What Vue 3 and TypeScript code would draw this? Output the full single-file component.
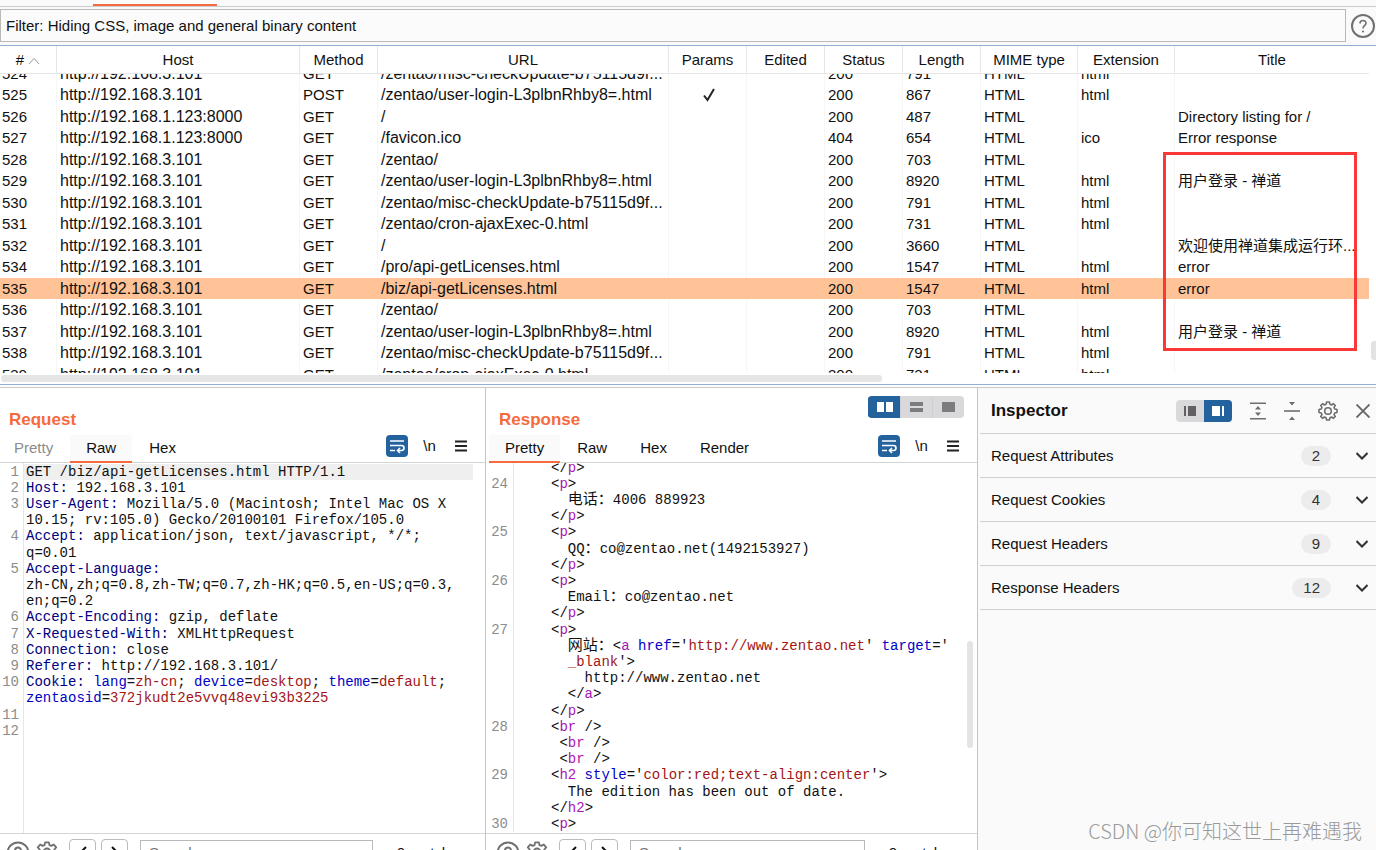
<script setup lang="ts">
import { onMounted, ref } from 'vue'

interface Entry {
  id: number
  host: string
  method: string
  url: string
  params?: boolean
  status: number
  length: number
  ext?: string
  title?: string
}

type Token = [kind: string, text: string]
interface Line {
  no?: number
  tokens: Token[]
}

const LOCAL = 'http://192.168.3.101'
const REMOTE = 'http://192.168.1.123:8000'
const LOGIN = '/zentao/user-login-L3plbnRhby8=.html'
const CHECK = '/zentao/misc-checkUpdate-b75115d9f...'
const CRON = '/zentao/cron-ajaxExec-0.html'

const entries: Entry[] = [
  { id: 524, host: LOCAL, method: 'GET', url: CHECK, status: 200, length: 791, ext: 'html' },
  { id: 525, host: LOCAL, method: 'POST', url: LOGIN, params: true, status: 200, length: 867, ext: 'html' },
  { id: 526, host: REMOTE, method: 'GET', url: '/', status: 200, length: 487, title: 'Directory listing for /' },
  { id: 527, host: REMOTE, method: 'GET', url: '/favicon.ico', status: 404, length: 654, ext: 'ico', title: 'Error response' },
  { id: 528, host: LOCAL, method: 'GET', url: '/zentao/', status: 200, length: 703 },
  { id: 529, host: LOCAL, method: 'GET', url: LOGIN, status: 200, length: 8920, ext: 'html', title: '用户登录 - 禅道' },
  { id: 530, host: LOCAL, method: 'GET', url: CHECK, status: 200, length: 791, ext: 'html' },
  { id: 531, host: LOCAL, method: 'GET', url: CRON, status: 200, length: 731, ext: 'html' },
  { id: 532, host: LOCAL, method: 'GET', url: '/', status: 200, length: 3660, title: '欢迎使用禅道集成运行环...' },
  { id: 534, host: LOCAL, method: 'GET', url: '/pro/api-getLicenses.html', status: 200, length: 1547, ext: 'html', title: 'error' },
  { id: 535, host: LOCAL, method: 'GET', url: '/biz/api-getLicenses.html', status: 200, length: 1547, ext: 'html', title: 'error' },
  { id: 536, host: LOCAL, method: 'GET', url: '/zentao/', status: 200, length: 703 },
  { id: 537, host: LOCAL, method: 'GET', url: LOGIN, status: 200, length: 8920, ext: 'html', title: '用户登录 - 禅道' },
  { id: 538, host: LOCAL, method: 'GET', url: CHECK, status: 200, length: 791, ext: 'html' },
  { id: 539, host: LOCAL, method: 'GET', url: CRON, status: 200, length: 731, ext: 'html' },
]

const selectedId = ref(535)

const requestLines: Line[] = [
  { no: 1, tokens: [['', 'GET /biz/api-getLicenses.html HTTP/1.1']] },
  { no: 2, tokens: [['name', 'Host:'], ['', ' 192.168.3.101']] },
  { no: 3, tokens: [['name', 'User-Agent:'], ['', ' Mozilla/5.0 (Macintosh; Intel Mac OS X']] },
  { tokens: [['', '10.15; rv:105.0) Gecko/20100101 Firefox/105.0']] },
  { no: 4, tokens: [['name', 'Accept:'], ['', ' application/json, text/javascript, */*;']] },
  { tokens: [['', 'q=0.01']] },
  { no: 5, tokens: [['name', 'Accept-Language:']] },
  { tokens: [['', 'zh-CN,zh;q=0.8,zh-TW;q=0.7,zh-HK;q=0.5,en-US;q=0.3,']] },
  { tokens: [['', 'en;q=0.2']] },
  { no: 6, tokens: [['name', 'Accept-Encoding:'], ['', ' gzip, deflate']] },
  { no: 7, tokens: [['name', 'X-Requested-With:'], ['', ' XMLHttpRequest']] },
  { no: 8, tokens: [['name', 'Connection:'], ['', ' close']] },
  { no: 9, tokens: [['name', 'Referer:'], ['', ' http://192.168.3.101/']] },
  {
    no: 10,
    tokens: [
      ['name', 'Cookie:'], ['attr', ' lang'], ['', '='], ['value', 'zh-cn'], ['', '; '],
      ['attr', 'device'], ['', '='], ['value', 'desktop'], ['', '; '],
      ['attr', 'theme'], ['', '='], ['value', 'default'], ['', ';'],
    ],
  },
  { tokens: [['attr', 'zentaosid'], ['', '='], ['value', '372jkudt2e5vvq48evi93b3225']] },
  { no: 11, tokens: [] },
  { no: 12, tokens: [] },
]

const open = (tag: string, no?: number, lead = ''): Line => ({ no, tokens: [['', lead + '<'], ['tag', tag], ['', '>']] })
const close = (tag: string, lead = ''): Line => ({ tokens: [['', lead + '</'], ['tag', tag], ['', '>']] })
const br = (lead = '', no?: number): Line => ({ no, tokens: [['', lead + '<'], ['tag', 'br'], ['', ' />']] })

const responseLines: Line[] = [
  close('p'),
  open('p', 24),
  { tokens: [['', '  '], ['cjk', '电话：'], ['', '4006 889923']] },
  close('p'),
  open('p', 25),
  { tokens: [['', '  QQ'], ['cjk', '：'], ['', 'co@zentao.net(1492153927)']] },
  close('p'),
  open('p', 26),
  { tokens: [['', '  Email'], ['cjk', '：'], ['', 'co@zentao.net']] },
  close('p'),
  open('p', 27),
  {
    tokens: [
      ['', '  '], ['cjk', '网站：'], ['', '<'], ['tag', 'a'], ['attr', ' href'], ['', "='"],
      ['value', 'http://www.zentao.net'], ['', "' "], ['attr', 'target'], ['', "='"],
    ],
  },
  { tokens: [['value', '  _blank'], ['', "'>"]] },
  { tokens: [['', '    http://www.zentao.net']] },
  close('a', '  '),
  close('p'),
  br('', 28),
  br(' '),
  br(' '),
  { no: 29, tokens: [['', '<'], ['tag', 'h2'], ['attr', ' style'], ['', "='"], ['value', 'color:red;text-align:center'], ['', "'>"]] },
  { tokens: [['', '  The edition has been out of date.']] },
  close('h2'),
  open('p', 30),
]

const panes = [
  { key: 'request', title: 'Request', tabs: ['Pretty', 'Raw', 'Hex'], active: 'Raw', muted: 'Pretty', lines: requestLines },
  { key: 'response', title: 'Response', tabs: ['Pretty', 'Raw', 'Hex', 'Render'], active: 'Pretty', muted: '', lines: responseLines },
]

const sections = [
  { label: 'Request Attributes', count: 2 },
  { label: 'Request Cookies', count: 4 },
  { label: 'Request Headers', count: 9 },
  { label: 'Response Headers', count: 12 },
]

const history = ref<HTMLElement | null>(null)
onMounted(() => {
  if (history.value) history.value.scrollTop = 11
})
</script>

<template>
  <div class="app">
    <nav class="top-tabs">
      <button type="button">Intercept</button>
      <button type="button" class="current">HTTP history</button>
      <button type="button">WebSockets history</button>
      <button type="button">Options</button>
    </nav>

    <div class="filter-row">
      <button type="button" class="filter">Filter: Hiding CSS, image and general binary content</button>
      <button type="button" class="icon" aria-label="Help">
        <svg width="26" height="26" viewBox="0 0 26 26" fill="none" stroke="#707070" stroke-width="2">
          <circle cx="13" cy="13" r="11" />
          <path d="M10 10.500C10 6.500 16 6.500 16 10.300C16 12.500 13 12.500 13 15.500" stroke-width="1.600" />
          <circle cx="13" cy="18.500" r="1.100" fill="#707070" stroke="none" />
        </svg>
      </button>
    </div>

    <section class="history-wrap">
      <div ref="history" class="history">
        <table>
          <colgroup>
            <col class="c-id" /><col class="c-host" /><col class="c-small" /><col class="c-url" />
            <col class="c-small" /><col class="c-small" /><col class="c-small" /><col class="c-small" />
            <col class="c-mid" /><col class="c-mid" /><col />
          </colgroup>
          <thead>
            <tr>
              <th>
                #
                <svg width="12" height="8" viewBox="0 0 12 8" fill="none" stroke="#999"><path d="M1 7L6 1.500L11 7" /></svg>
              </th>
              <th>Host</th><th>Method</th><th>URL</th><th>Params</th><th>Edited</th><th>Status</th>
              <th>Length</th><th>MIME type</th><th>Extension</th><th>Title</th>
            </tr>
          </thead>
          <tbody>
            <tr v-for="e in entries" :key="e.id" :class="{ selected: e.id === selectedId }" @click="selectedId = e.id">
              <td>{{ e.id }}</td>
              <td class="wide">{{ e.host }}</td>
              <td>{{ e.method }}</td>
              <td class="wide">{{ e.url }}</td>
              <td class="tick">
                <svg v-if="e.params" width="14" height="14" viewBox="0 0 14 14" fill="none" stroke="#222" stroke-width="2">
                  <path d="M2 7.500L5.500 12L12 1" />
                </svg>
              </td>
              <td></td>
              <td>{{ e.status }}</td>
              <td>{{ e.length }}</td>
              <td>HTML</td>
              <td>{{ e.ext }}</td>
              <td>{{ e.title }}</td>
            </tr>
          </tbody>
        </table>
      </div>
      <div class="h-thumb"></div>
      <div class="v-thumb"></div>
      <div class="marker"></div>
    </section>

    <main class="detail">
      <section v-for="p in panes" :key="p.key" class="pane" :class="p.key">
        <header class="pane-head">
          <h2>{{ p.title }}</h2>
          <div v-if="p.key === 'response'" class="toggle">
            <button type="button" class="on" aria-label="Side by side">
              <svg width="18" height="12" viewBox="0 0 18 12" fill="#fff"><path d="M1 1h7v10h-7zM10 1h7v10h-7z" /></svg>
            </button>
            <button type="button" aria-label="Stacked">
              <svg width="14" height="12" viewBox="0 0 14 12" fill="#7c7c7e"><path d="M0 1h13v4h-13zM0 7h13v4h-13z" /></svg>
            </button>
            <button type="button" aria-label="Single">
              <svg width="14" height="12" viewBox="0 0 14 12" fill="#7c7c7e"><path d="M0 1h13v10h-13z" /></svg>
            </button>
          </div>
        </header>
        <div class="tab-row">
          <button
            v-for="t in p.tabs" :key="t" type="button" class="tab"
            :class="{ active: t === p.active, muted: t === p.muted }"
          >{{ t }}</button>
          <div class="tools">
            <button type="button" class="wrap" aria-label="Wrap lines">
              <svg width="22" height="22" viewBox="0 0 22 22" fill="none" stroke="#fff" stroke-width="1.600">
                <path d="M4 6H18M4 10.500H15.500Q18 10.500 18 13T15.500 15.500H12M4 15.500H9" />
                <path d="M14 13L11.500 15.500L14 18" />
              </svg>
            </button>
            <button type="button" class="newline">\n</button>
            <button type="button" class="icon" aria-label="Menu">
              <svg width="12" height="12" viewBox="0 0 12 12" stroke="#222" stroke-width="1.800"><path d="M0 1.500H12M0 6H12M0 10.500H12" /></svg>
            </button>
          </div>
        </div>
        <div class="editor">
          <ol>
            <li v-for="(line, i) in p.lines" :key="i">
              <span class="no">{{ line.no }}</span>
              <code><span v-for="(t, j) in line.tokens" :key="j" :class="t[0]">{{ t[1] }}</span></code>
            </li>
          </ol>
          <div v-if="p.key === 'response'" class="code-thumb"></div>
        </div>
        <footer class="search-clip">
          <div class="search">
            <button type="button" class="icon" aria-label="Search help">
              <svg width="24" height="24" viewBox="0 0 24 24" fill="none" stroke="#707070" stroke-width="2">
                <circle cx="12" cy="12" r="10.500" />
                <path d="M9 9.500C9 5.500 15 5.500 15 9.300C15 11.500 12 11.500 12 14.500" />
              </svg>
            </button>
            <button type="button" class="icon" aria-label="Search settings">
              <svg width="22" height="22" viewBox="0 0 24 24" fill="none" stroke="#707070" stroke-width="2">
                <circle cx="12" cy="12" r="3.800" />
                <path d="M10 1.500H14L14.700 4.500L16.800 5.300L19.400 3.800L22 7L20 9.300L20.300 11L22.800 12.500L22 16.500L19 16.800L17.800 18.500L18.400 21.200L14.800 22.600L13 20.500H11L9.200 22.600L5.600 21.200L6.200 18.500L5 16.800L2 16.500L1.200 12.500L3.700 11L4 9.300L2 7L4.600 3.800L7.200 5.300L9.300 4.500Z" stroke-linejoin="round" />
              </svg>
            </button>
            <button type="button" class="nav" aria-label="Previous match">
              <svg width="8" height="14" viewBox="0 0 8 14" fill="none" stroke="#111" stroke-width="2"><path d="M7 1L1 7L7 13" /></svg>
            </button>
            <button type="button" class="nav" aria-label="Next match">
              <svg width="8" height="14" viewBox="0 0 8 14" fill="none" stroke="#111" stroke-width="2"><path d="M1 1L7 7L1 13" /></svg>
            </button>
            <input type="text" placeholder="Search..." :aria-label="'Search ' + p.title" />
            <span class="matches">0 matches</span>
          </div>
        </footer>
      </section>

      <aside class="inspector">
        <header class="inspector-head">
          <h2>Inspector</h2>
          <div class="toggle small">
            <button type="button" aria-label="Dock left">
              <svg width="12" height="10" viewBox="0 0 12 10" fill="#626065"><path d="M0 0h2v10h-2zM4 0h8v10h-8z" /></svg>
            </button>
            <button type="button" class="on" aria-label="Dock right">
              <svg width="12" height="10" viewBox="0 0 12 10" fill="#fff"><path d="M0 0h8v10h-8zM10 0h2v10h-2z" /></svg>
            </button>
          </div>
          <button type="button" class="icon" aria-label="Expand all">
            <svg width="16" height="18" viewBox="0 0 16 18"><path d="M0 1.200H16M0 16.800H16" stroke="#6e6e6e" stroke-width="1.600" /><path d="M8 4L11 7.500H5ZM8 14L11 10.500H5Z" fill="#6e6e6e" /></svg>
          </button>
          <button type="button" class="icon" aria-label="Collapse all">
            <svg width="16" height="18" viewBox="0 0 16 18"><path d="M0 9H16" stroke="#6e6e6e" stroke-width="1.600" /><path d="M8 3.500L11 0H5ZM8 14.500L11 18H5Z" fill="#6e6e6e" /></svg>
          </button>
          <button type="button" class="icon" aria-label="Inspector settings">
            <svg width="20" height="20" viewBox="0 0 20 20" fill="none" stroke="#6e6e6e" stroke-width="1.600" stroke-linejoin="round">
              <circle cx="10" cy="10" r="3.300" />
              <path d="M8.600 1H11.400L12 3.300L13.600 4L15.400 2.700L17.300 4.600L16 6.400L16.700 8L19 8.600V11.400L16.700 12L16 13.600L17.300 15.400L15.400 17.300L13.600 16L12 16.700L11.400 19H8.600L8 16.700L6.400 16L4.600 17.300L2.700 15.400L4 13.600L3.300 12L1 11.400V8.600L3.300 8L4 6.400L2.700 4.600L4.600 2.700L6.400 4L8 3.300Z" />
            </svg>
          </button>
          <button type="button" class="icon" aria-label="Close">
            <svg width="14" height="14" viewBox="0 0 14 14" stroke="#666" stroke-width="1.900"><path d="M0.500 0.500L13.500 13.500M13.500 0.500L0.500 13.500" /></svg>
          </button>
        </header>
        <button v-for="s in sections" :key="s.label" type="button" class="section">
          <span class="label">{{ s.label }}</span>
          <span class="count">{{ s.count }}</span>
          <svg width="12" height="8" viewBox="0 0 12 8" fill="none" stroke="#333" stroke-width="2"><path d="M0.500 1L6 6.500L11.500 1" /></svg>
        </button>
        <p class="credit">CSDN @你可知这世上再难遇我</p>
      </aside>
    </main>
  </div>
</template>

<style>
body {
  margin: 0;
}
</style>

<style scoped>
.app {
  display: flex;
  flex-direction: column;
  height: 100vh;
  overflow: hidden;
  background: #fff;
  color: #111;
  font: 15px/20px "Liberation Sans", "Noto Sans CJK SC", sans-serif;
}
.app * {
  box-sizing: border-box;
}
button {
  margin: 0;
  padding: 0;
  border: 0;
  background: none;
  color: inherit;
  font: inherit;
}
svg {
  display: block;
}
h2 {
  margin: 0;
  font-size: 17px;
  line-height: 20px;
}
.icon {
  flex: none;
}

.top-tabs {
  display: flex;
  flex: none;
  align-items: flex-end;
  height: 7px;
  overflow: hidden;
  border-bottom: 1px solid #ccc;
  background: #fafafa;
  color: #555;
}
.top-tabs button {
  flex: none;
  padding: 0 14px 4px;
}
.top-tabs button.current {
  margin: 0 6px 0 7px;
  padding: 0 18px 2px;
  border-bottom: 2px solid #f56b3d;
}

.filter-row {
  display: flex;
  flex: none;
  gap: 4px;
  padding: 2px 0 3px;
  border-bottom: 1px solid #93b1d6;
  background: #fafafa;
}
.filter {
  flex: 1;
  height: 33px;
  padding: 0 5px;
  border: 1px solid #b9b9b9;
  background: #fbfbfb;
  text-align: left;
}

.history-wrap {
  position: relative;
  flex: none;
  height: 339px;
  border-bottom: 1px solid #93b1d6;
}
.history {
  height: 327px;
  margin-right: 7px;
  overflow: hidden;
}
table {
  width: 100%;
  border-collapse: separate;
  border-spacing: 0;
  table-layout: fixed;
}
.c-id { width: 57px; }
.c-host { width: 243px; }
.c-small { width: 78px; }
.c-url { width: 291px; }
.c-mid { width: 97px; }
th {
  position: sticky;
  top: 0;
  height: 28px;
  padding: 0;
  border-right: 1px solid #e6e6e6;
  border-bottom: 1px solid #e6e6e6;
  background: #fff;
  font-weight: normal;
}
th svg {
  display: inline-block;
}
td {
  height: 21px;
  padding: 0 0 0 3px;
  overflow: hidden;
  border-right: 1px solid #f6f6f6;
  line-height: 20px;
  white-space: nowrap;
}
th:last-child,
td:last-child {
  border-right: 0;
}
td:first-child {
  padding-left: 2px;
}
tr:nth-child(even) td {
  height: 22px;
}
td.wide {
  font-size: 16px;
}
td.tick svg {
  margin: 0 auto;
}
.selected td {
  border-color: #ffc397;
  background: #ffc397;
}
.h-thumb {
  width: 64%;
  height: 7px;
  margin: 2px 1px;
  border-radius: 3px;
  background: #e5e5e5;
}
.v-thumb {
  position: absolute;
  top: 295px;
  right: 0;
  width: 5px;
  height: 19px;
  border-radius: 3px 0 0 3px;
  background: #e2e2e2;
}
.marker {
  position: absolute;
  top: 106px;
  right: 19px;
  width: 194px;
  height: 199px;
  border: 3px solid #fb3838;
  pointer-events: none;
}

.detail {
  display: grid;
  flex: 1;
  grid-template-columns: 486fr 492fr 398fr;
  min-height: 0;
  margin-top: 2px;
  border-top: 1px solid #c8c8c8;
}
.pane {
  display: flex;
  flex-direction: column;
  min-width: 0;
  min-height: 0;
  border-right: 1px solid #c4c4c4;
}
.pane-head {
  display: flex;
  flex: none;
  align-items: flex-start;
  justify-content: space-between;
  height: 47px;
  padding: 8px 13px 0 9px;
}
.response .pane-head {
  padding-left: 13px;
}
.pane-head h2 {
  margin-top: 14px;
  color: #f56b3d;
}
.toggle {
  display: flex;
  height: 22px;
  overflow: hidden;
  border-radius: 4px;
  background: #d9d9db;
}
.toggle button {
  display: flex;
  align-items: center;
  justify-content: center;
  width: 32px;
  border-left: 1px solid #cfcfd1;
}
.toggle button.on {
  border-color: #23629c;
  background: #23629c;
}
.toggle.small button {
  width: 28px;
  border: 0;
}
.tab-row {
  display: flex;
  flex: none;
  gap: 1px;
  height: 28px;
  border-bottom: 1px solid #d4d4d4;
}
.response .tab-row {
  margin-left: 3px;
}
.tab {
  height: 28px;
  padding: 0 16px;
  border-bottom: 2px solid transparent;
}
.request .tab:first-child {
  padding-left: 14px;
}
.tab.muted {
  color: #8c8c8c;
}
.tab.active {
  border-color: #f56b3d;
  background: #fafafa;
}
.tools {
  display: flex;
  gap: 14px;
  align-items: center;
  height: 22px;
  margin-left: auto;
  padding-right: 18px;
}
.wrap {
  border-radius: 4px;
  background: #23629c;
}
.newline {
  width: 15px;
}
.tools .icon {
  padding-left: 4px;
}

.editor {
  position: relative;
  flex: 1;
  min-height: 0;
  overflow: hidden;
  border-bottom: 1px solid #d4d4d4;
}
.editor ol {
  min-height: 100%;
  margin: 0;
  padding: 1px 12px 0 0;
  background: linear-gradient(#e6e6e6, #e6e6e6) 23px 0 / 1px 100% no-repeat;
  font: 14px/16px "Liberation Mono", "Noto Sans CJK SC", monospace;
  list-style: none;
}
.response ol {
  margin-top: -3px;
  padding-top: 0;
  background-position-x: 27px;
}
.editor li {
  display: flex;
  height: 16px;
}
.editor li:nth-child(5n) {
  height: 17px;
}
.no {
  flex: none;
  width: 19px;
  color: #8c8c8c;
  text-align: right;
}
code {
  flex: 1;
  margin-left: 5px;
  padding-left: 2px;
  font: inherit;
  white-space: pre;
}
.request li:first-child code {
  background: #efefef;
}
.response .no {
  width: 22px;
}
.response code {
  margin-left: 6px;
  padding-left: 37px;
}
.name { color: #00007f; }
.attr { color: #0000c4; }
.value { color: #a31515; }
.tag { color: #a815b5; }
.cjk { font-size: 15px; }
.code-thumb {
  position: absolute;
  top: 48%;
  right: 4px;
  width: 6px;
  height: 29%;
  border-radius: 3px;
  background: #e4e4e4;
}

.search-clip {
  flex: none;
  height: 16px;
  overflow: hidden;
}
.search {
  display: flex;
  align-items: flex-start;
  padding: 5px 19px 0 6px;
}
.response .search {
  padding-left: 10px;
}
.search .icon {
  margin: 2px 6px 0 0;
}
.nav {
  display: flex;
  flex: none;
  align-items: center;
  justify-content: center;
  width: 27px;
  height: 27px;
  margin: 0 0 0 5px;
  border: 1px solid #bbb;
  border-radius: 4px;
  background: #fff;
}
.search input {
  flex: 1;
  min-width: 0;
  height: 25px;
  margin: 1px 24px 0 12px;
  padding: 0 8px;
  border: 1px solid #b9b9b9;
  font: inherit;
}
.matches {
  flex: none;
  margin-top: 4px;
}

.inspector {
  display: flex;
  flex-direction: column;
  min-width: 0;
  padding-left: 2px;
  background: #fafafa;
}
.inspector-head {
  display: flex;
  flex: none;
  gap: 18px;
  align-items: center;
  height: 46px;
  padding: 1px 6px 0 11px;
  border-bottom: 1px solid #d0d0d0;
}
.inspector-head h2 {
  flex: 1;
  color: #111;
}
.section {
  display: flex;
  flex: none;
  align-items: center;
  height: 44px;
  padding: 0 8px 0 11px;
  border-bottom: 1px solid #d0d0d0;
  text-align: left;
}
.label {
  flex: 1;
}
.count {
  min-width: 30px;
  margin-right: 25px;
  padding: 0 11px;
  border-radius: 10px;
  background: #ececec;
  color: #333;
  text-align: center;
}
.credit {
  margin: auto 14px 6px auto;
  color: #9a9a9a;
  font: 300 20px/26px "Noto Sans CJK SC", sans-serif;
}
</style>
